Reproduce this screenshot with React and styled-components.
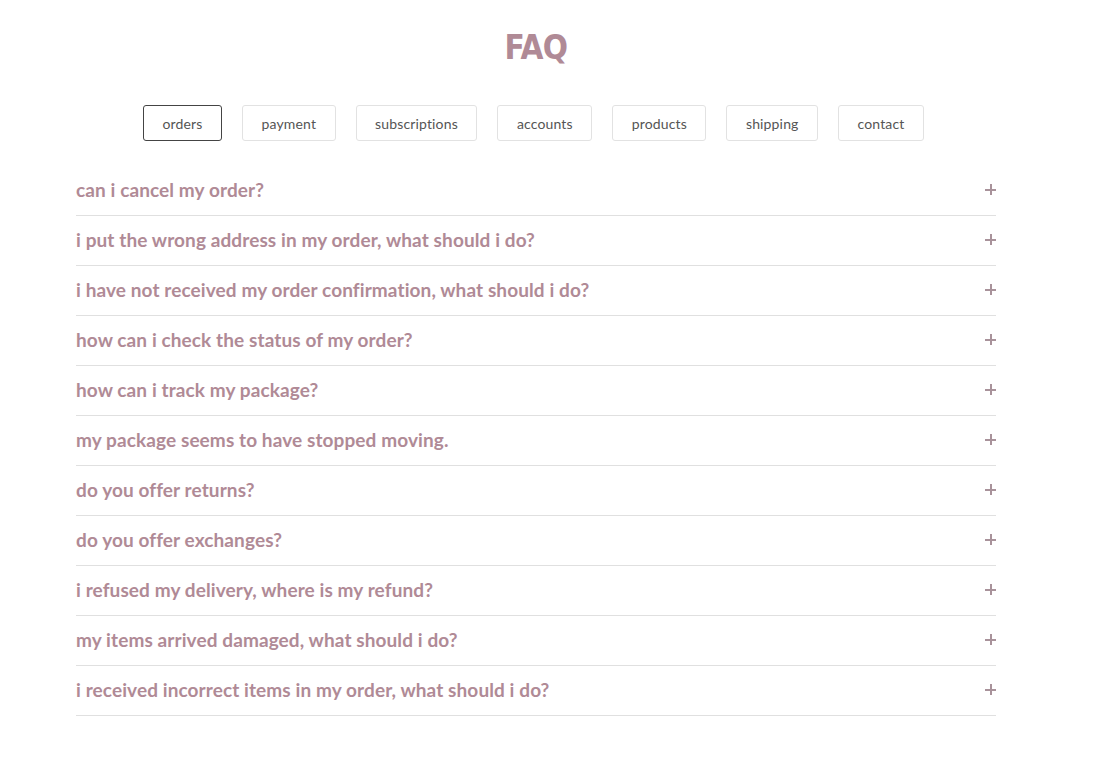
import React, { useState } from 'react';
import styled, { createGlobalStyle } from 'styled-components';

const GlobalStyle = createGlobalStyle`
  body {
    margin: 0;
    background: #fff;
    font-family: 'Lato', 'Noto Sans', sans-serif;
  }
`;

const Page = styled.div`
  width: 920px;
  margin-left: 76px;
  padding-top: 28px;
`;

const Title = styled.h1`
  margin: 0;
  text-align: center;
  font-family: 'DejaVu Sans', sans-serif;
  font-stretch: condensed;
  font-size: 33px;
  font-weight: 700;
  line-height: 40px;
  color: #b08a96;
  letter-spacing: -0.5px;
`;

const Tabs = styled.div`
  display: flex;
  justify-content: center;
  gap: 20px;
  margin-top: 37px;
  padding-right: 5px;
`;

const Tab = styled.button`
  height: 36px;
  padding: 0 18.5px;
  background: #fff;
  border: 1px solid ${p => (p.$active ? '#444' : '#e2e2e2')};
  border-radius: 3px;
  font-family: 'Lato', sans-serif;
  font-size: 14px;
  letter-spacing: 0.15px;
  color: #555;
  cursor: pointer;
`;

const List = styled.div`
  margin-top: 25px;
`;

const Row = styled.div`
  display: flex;
  align-items: center;
  justify-content: space-between;
  box-sizing: border-box;
  height: 50px;
  padding-bottom: 2px;
  border-bottom: 1px solid #e0e0e0;
  cursor: pointer;
`;

const Question = styled.span`
  font-size: 19px;
  font-weight: 700;
  letter-spacing: 0.1px;
  color: #b08a96;
`;

const Plus = styled.span`
  width: 11px;
  height: 11px;
  position: relative;
  &::before,
  &::after {
    content: '';
    position: absolute;
    background: #a8929a;
  }
  &::before {
    left: 0;
    top: 4.5px;
    width: 11px;
    height: 2px;
  }
  &::after {
    left: 4.5px;
    top: 0;
    width: 2px;
    height: 11px;
  }
`;

const tabs = ['orders', 'payment', 'subscriptions', 'accounts', 'products', 'shipping', 'contact'];

const questions = [
  'can i cancel my order?',
  'i put the wrong address in my order, what should i do?',
  'i have not received my order confirmation, what should i do?',
  'how can i check the status of my order?',
  'how can i track my package?',
  'my package seems to have stopped moving.',
  'do you offer returns?',
  'do you offer exchanges?',
  'i refused my delivery, where is my refund?',
  'my items arrived damaged, what should i do?',
  'i received incorrect items in my order, what should i do?',
];

const App = () => {
  const [active, setActive] = useState('orders');

  return (
    <>
      <GlobalStyle />
      <Page>
        <Title>FAQ</Title>
        <Tabs>
          {tabs.map(t => (
            <Tab key={t} $active={t === active} onClick={() => setActive(t)}>
              {t}
            </Tab>
          ))}
        </Tabs>
        <List>
          {questions.map(q => (
            <Row key={q}>
              <Question>{q}</Question>
              <Plus />
            </Row>
          ))}
        </List>
      </Page>
    </>
  );
};

export default App;
